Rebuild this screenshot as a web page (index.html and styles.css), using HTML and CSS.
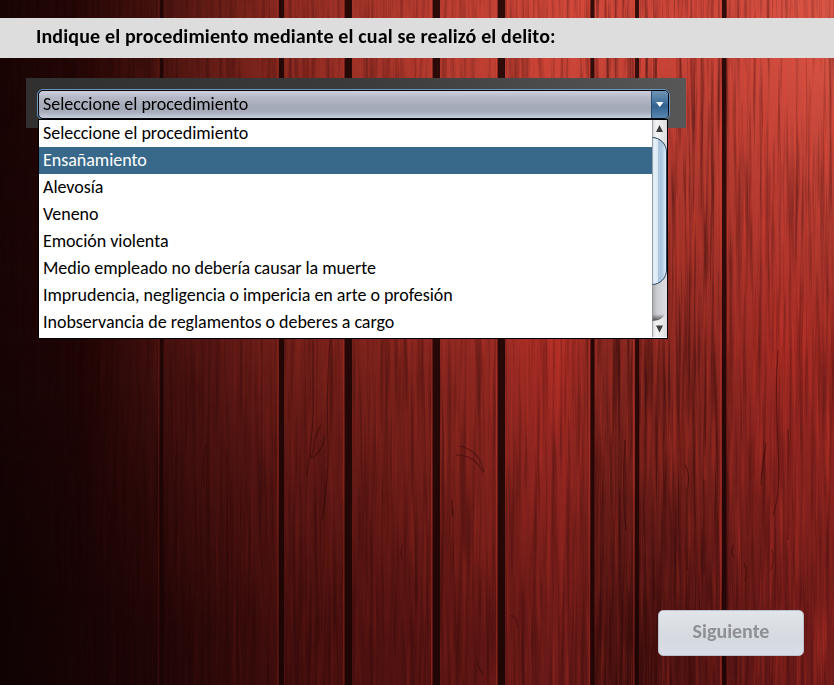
FILE: index.html
```html
<!DOCTYPE html>
<html lang="es">
<head>
<meta charset="utf-8">
<title>Procedimiento</title>
<link rel="stylesheet" href="styles.css">
</head>
<body>
<div class="screen">
  <svg class="wood" viewBox="0 0 834 685" preserveAspectRatio="none" aria-hidden="true">
    <defs>
      <linearGradient id="top"><stop offset="0" stop-color="#190504"/><stop offset=".09" stop-color="#240706"/><stop offset=".2" stop-color="#4c1510"/><stop offset=".34" stop-color="#8c2a21"/><stop offset=".5" stop-color="#b53c30"/><stop offset=".68" stop-color="#d0493b"/><stop offset=".84" stop-color="#ca463a"/><stop offset="1" stop-color="#da5747"/></linearGradient>
      <linearGradient id="mid"><stop offset="0" stop-color="#190506"/><stop offset=".1" stop-color="#210606"/><stop offset=".2" stop-color="#451210"/><stop offset=".33" stop-color="#6e1e19"/><stop offset=".5" stop-color="#86261f"/><stop offset=".59" stop-color="#962b23"/><stop offset=".67" stop-color="#b02f27"/><stop offset=".72" stop-color="#842720"/><stop offset=".85" stop-color="#8b2821"/><stop offset=".94" stop-color="#a42b25"/><stop offset="1" stop-color="#962922"/></linearGradient>
      <linearGradient id="low"><stop offset="0" stop-color="#0f0303"/><stop offset=".19" stop-color="#200607"/><stop offset=".34" stop-color="#400e0d"/><stop offset=".55" stop-color="#5a1513"/><stop offset=".68" stop-color="#6c1b19"/><stop offset=".75" stop-color="#45110f"/><stop offset=".86" stop-color="#561514"/><stop offset="1" stop-color="#721c1a"/></linearGradient>
      <linearGradient id="fadeMid" x2="0" y2="1"><stop offset=".05" stop-color="#000"/><stop offset=".52" stop-color="#fff"/></linearGradient>
      <linearGradient id="fadeLow" x2="0" y2="1"><stop offset=".5" stop-color="#000"/><stop offset=".93" stop-color="#fff"/></linearGradient>
      <mask id="mMid"><rect width="834" height="685" fill="url(#fadeMid)"/></mask>
      <mask id="mLow"><rect width="834" height="685" fill="url(#fadeLow)"/></mask>
      <filter id="dark" x="0" y="0" width="100%" height="100%" color-interpolation-filters="sRGB"><feTurbulence type="fractalNoise" baseFrequency=".27 .007" numOctaves="4" seed="8"/><feColorMatrix values="0 0 0 0 .1  0 0 0 0 .01  0 0 0 0 .01  2.2 0 0 0 -.98"/></filter>
      <filter id="light" x="0" y="0" width="100%" height="100%" color-interpolation-filters="sRGB"><feTurbulence type="fractalNoise" baseFrequency=".3 .01" numOctaves="3" seed="22"/><feColorMatrix values="0 0 0 0 1  0 0 0 0 .28  0 0 0 0 .2  0 2 0 0 -.95"/></filter>
      <linearGradient id="lightFade"><stop offset=".05" stop-color="#000"/><stop offset=".5" stop-color="#777"/><stop offset="1" stop-color="#fff"/></linearGradient>
      <mask id="mLight"><rect width="834" height="685" fill="url(#lightFade)"/></mask>
      <linearGradient id="grainFade"><stop offset="0" stop-color="#999"/><stop offset=".7" stop-color="#999"/><stop offset=".715" stop-color="#eee"/><stop offset=".86" stop-color="#eee"/><stop offset=".88" stop-color="#aaa"/><stop offset="1" stop-color="#aaa"/></linearGradient>
      <mask id="mGrain"><rect width="834" height="685" fill="url(#grainFade)"/></mask>
    </defs>
    <rect width="834" height="685" fill="url(#top)"/>
    <rect width="834" height="685" fill="url(#mid)" mask="url(#mMid)"/>
    <rect width="834" height="685" fill="url(#low)" mask="url(#mLow)"/>
    <g mask="url(#mGrain)"><rect width="834" height="685" filter="url(#dark)" opacity=".66"/></g>
    <g mask="url(#mLight)"><rect width="834" height="685" filter="url(#light)" opacity=".36"/></g>
    <g fill="#190404">
      <rect x="73" width="2" height="685" opacity=".4"/><rect x="160" width="3.500" height="685" opacity=".8"/>
      <rect x="279" width="5" height="685" opacity=".88"/><rect x="344.500" width="7.500" height="685" opacity=".88"/>
      <rect x="432.500" width="7.500" height="685" opacity=".88"/><rect x="497.500" width="7.500" height="685" opacity=".88"/>
      <rect x="590.500" width="4" height="685" opacity=".85"/><rect x="635" width="4" height="685" opacity=".82"/>
      <rect x="722" width="4.500" height="685" opacity=".85"/>
    </g>
    <g fill="#e64432" opacity=".3">
      <rect x="158" width="1" height="685" opacity=".35"/><rect x="277" width="1.500" height="685" opacity=".6"/><rect x="343" width="1.500" height="685" opacity=".7"/>
      <rect x="431" width="1.500" height="685"/><rect x="496" width="1.500" height="685"/><rect x="588.500" width="1.500" height="685"/>
      <rect x="633" width="1.500" height="685"/><rect x="720" width="1.500" height="685"/>
    </g>
    <g fill="none" stroke="#230504" stroke-width="1.200" opacity=".42">
      <path d="M321 425q-8 14-7 23q-4 11-2 10q11-7 12-21M313 340v75q-1 25-6 60M330 340q-4 55-2 105q1 30-6 75"/>
      <path d="M456 455q20 0 27 18M460 446q20 5 24 26M403 545q-3 4-1 14M452 500v15M453 509v8"/>
      <path d="M766 443q-5 32-5 42M778 350q-3 45 0 95t-5 70M788 430v110M734 545q-4 7 0 12M744 563q4 8 1 18M772 550q3 10-1 20"/>
      <path d="M685 465q6 10 2 25v80M704 480v95M625 440q-3 50 1 90M206 445q-4 17-2 42M227 450v110M211 560v12"/>
      <path d="M510 616q8-2 7 12M479 660q-3 5 4 14M672 20q12 30 8 80"/>
    </g>
  </svg>
  <main class="content">
    <h1 class="title"><span>Indique el procedimiento mediante el cual se realizó el delito:</span></h1>
    <section class="panel">
      <div class="combo">
        <div class="combo-field"><span class="combo-text">Seleccione el procedimiento</span>
          <span class="combo-button"><svg width="8" height="6" viewBox="0 0 8 6"><path d="M0 0h7.500L3.750 5z" fill="#fff"/></svg></span>
        </div>
        <div class="popup">
          <ul class="options">
            <li>Seleccione el procedimiento</li>
            <li class="selected">Ensañamiento</li>
            <li>Alevosía</li>
            <li>Veneno</li>
            <li>Emoción violenta</li>
            <li>Medio empleado no debería causar la muerte</li>
            <li>Imprudencia, negligencia o impericia en arte o profesión</li>
            <li>Inobservancia de reglamentos o deberes a cargo</li>
          </ul>
          <svg class="scrollbar" width="15" height="217" viewBox="0 0 15 217">
            <defs>
              <linearGradient id="track"><stop offset="0" stop-color="#a7a9af"/><stop offset=".35" stop-color="#cdced4"/><stop offset="1" stop-color="#dddde2"/></linearGradient>
              <linearGradient id="thumb"><stop offset="0" stop-color="#8fb3d2"/><stop offset=".12" stop-color="#e7f1fa"/><stop offset=".38" stop-color="#dbe9f5"/><stop offset=".46" stop-color="#a9c4dc"/><stop offset=".72" stop-color="#b2cce2"/><stop offset="1" stop-color="#e6f4ff"/></linearGradient>
              <linearGradient id="arrowBg"><stop offset="0" stop-color="#d6d6d8"/><stop offset=".3" stop-color="#f4f4f5"/><stop offset="1" stop-color="#dcdcdf"/></linearGradient>
              <linearGradient id="shade" x2="0" y2="1"><stop offset="0" stop-color="#555" stop-opacity="0"/><stop offset="1" stop-color="#444"/></linearGradient>
            </defs>
            <rect width="15" height="217" fill="url(#track)"/>
            <path d="M0 0h15v30Q14 19 0 17z" fill="url(#arrowBg)"/>
            <path d="M0 194h13q-3 7-13 7z" fill="url(#shade)"/>
            <path d="M0 201q12 0 15-10v26H0z" fill="url(#arrowBg)"/>
            <path d="M0 17.500C8 17.500 14.500 24 14.500 32v118C14.500 158 8 164.500 0 164.500" fill="url(#thumb)" stroke="#25435d"/>
            <path d="M.5 0v217" stroke="#8c8f94" opacity=".7"/>
            <path d="M4 12h7L7.500 5zM4 205.500h7L7.500 212.500z" fill="#3d3d3d"/>
          </svg>
        </div>
      </div>
    </section>
    <button class="next" disabled><span>Siguiente</span></button>
  </main>
</div>
</body>
</html>
```
FILE: styles.css
```css
* { box-sizing: border-box; }
body { margin: 0; font-family: Carlito, Lato, "Open Sans", sans-serif; color: #000; }
.screen { display: grid; width: 834px; height: 685px; overflow: hidden; background: #250706; }
.wood, .content { grid-area: 1 / 1; width: 834px; height: 685px; }
.content { z-index: 1; display: flex; flex-direction: column; padding-top: 18px; }
.title { display: flex; align-items: center; height: 40px; margin: 0; padding: 0 0 4px 36px; background: #dddddd; font-size: 20px; letter-spacing: .15px; font-weight: 700; white-space: nowrap; }
.panel { width: 660px; height: 50px; margin: 20px 0 0 26px; padding: 11px 16px 0 11px; background: linear-gradient(90deg, #303030, #3b3b3b 50%, #575757); }
.combo { position: relative; width: 633px; height: 31px; border: 1px solid #6894bd; border-radius: 6px; background: #315c84; }
.combo-field { display: flex; height: 29px; border: 1px solid #05080c; border-radius: 5px; overflow: hidden; background: linear-gradient(#ced1dc, #b6bac7 22%, #a4a9b8 60%, #a8adbb 78%, #c9cfdd); }
.combo-text { flex: 1; padding-left: 4px; line-height: 27px; font-size: 18px; letter-spacing: -.03px; white-space: nowrap; }
.combo-button { display: flex; align-items: center; justify-content: center; width: 17px; border-left: 1px solid #254b6d; background: linear-gradient(#7094b6, #3f709b 45%, #30618e 55%, #5a88b1); }
.popup { position: absolute; top: 29px; left: 0; z-index: 2; display: flex; width: 630px; height: 220px; border: 1px solid #000; background: #fff; }
.options { flex: 1; margin: 0; padding: 0; list-style: none; }
.options li { height: 27px; padding-left: 4px; line-height: 27px; font-size: 18px; letter-spacing: -.03px; white-space: nowrap; }
.options .selected { background: #39698a; color: #fff; }
.scrollbar { display: block; flex: none; }
.next { width: 146px; height: 46px; margin: auto 30px 29px auto; padding: 0 0 5px; border: 1px solid #b9bfcb; border-radius: 5px; background: linear-gradient(#e1e4e8, #d5d9e0 65%, #d9dde6); color: #8e9093; font: 700 20px Carlito, Lato, sans-serif; }
```
